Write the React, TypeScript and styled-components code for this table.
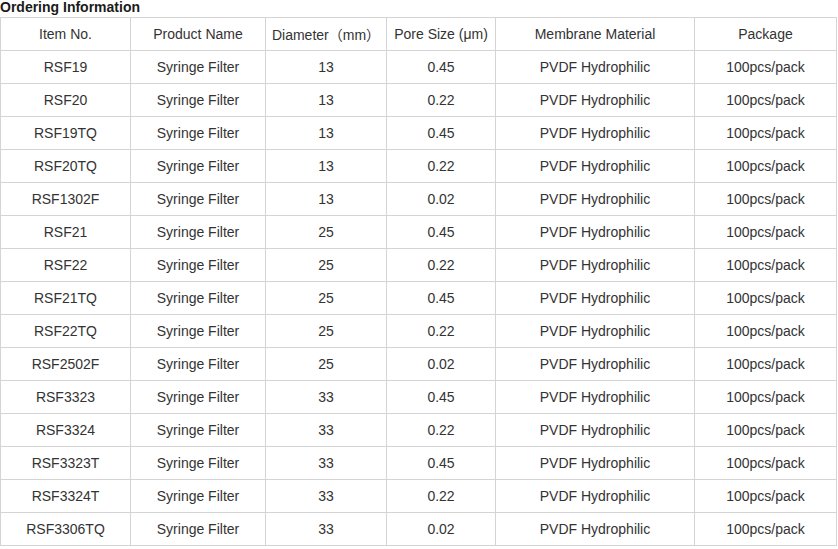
import React from "react";
import styled, { createGlobalStyle } from "styled-components";

const Global = createGlobalStyle`
  html, body { margin: 0; padding: 0; background: #fff; }
  body { font-family: "Liberation Sans", Arial, "Noto Sans CJK SC", sans-serif; }
`;

const Page = styled.div`
  width: 838px;
`;

const Title = styled.div`
  font-size: 14px;
  font-weight: bold;
  line-height: 14px;
  color: #1a1a1a;
  margin-bottom: 3px;
`;

const Table = styled.table`
  border-collapse: collapse;
  table-layout: fixed;
  width: 837px;
  font-size: 14px;
  color: #333;
`;

const Cell = styled.td`
  border: 1px solid #d4d4d4;
  height: 32px;
  padding: 0;
  text-align: center;
  vertical-align: middle;
  white-space: nowrap;
`;

const widths = [130, 135, 121, 109, 199, 142];

const headers = ["Item No.", "Product Name", "Diameter\uff08mm\uff09", "Pore Size (\u03bcm)", "Membrane Material", "Package"];

const rows: [string, string, string][] = [
  ["RSF19", "13", "0.45"],
  ["RSF20", "13", "0.22"],
  ["RSF19TQ", "13", "0.45"],
  ["RSF20TQ", "13", "0.22"],
  ["RSF1302F", "13", "0.02"],
  ["RSF21", "25", "0.45"],
  ["RSF22", "25", "0.22"],
  ["RSF21TQ", "25", "0.45"],
  ["RSF22TQ", "25", "0.22"],
  ["RSF2502F", "25", "0.02"],
  ["RSF3323", "33", "0.45"],
  ["RSF3324", "33", "0.22"],
  ["RSF3323T", "33", "0.45"],
  ["RSF3324T", "33", "0.22"],
  ["RSF3306TQ", "33", "0.02"],
];

export default function App() {
  return (
    <Page>
      <Global />
      <Title>Ordering Information</Title>
      <Table>
        <colgroup>
          {widths.map((w, i) => (
            <col key={i} style={{ width: w }} />
          ))}
        </colgroup>
        <tbody>
          <tr>
            {headers.map((h) => (
              <Cell key={h}>{h}</Cell>
            ))}
          </tr>
          {rows.map(([item, dia, pore]) => (
            <tr key={item}>
              <Cell>{item}</Cell>
              <Cell>Syringe Filter</Cell>
              <Cell>{dia}</Cell>
              <Cell>{pore}</Cell>
              <Cell>PVDF Hydrophilic</Cell>
              <Cell>100pcs/pack</Cell>
            </tr>
          ))}
        </tbody>
      </Table>
    </Page>
  );
}
